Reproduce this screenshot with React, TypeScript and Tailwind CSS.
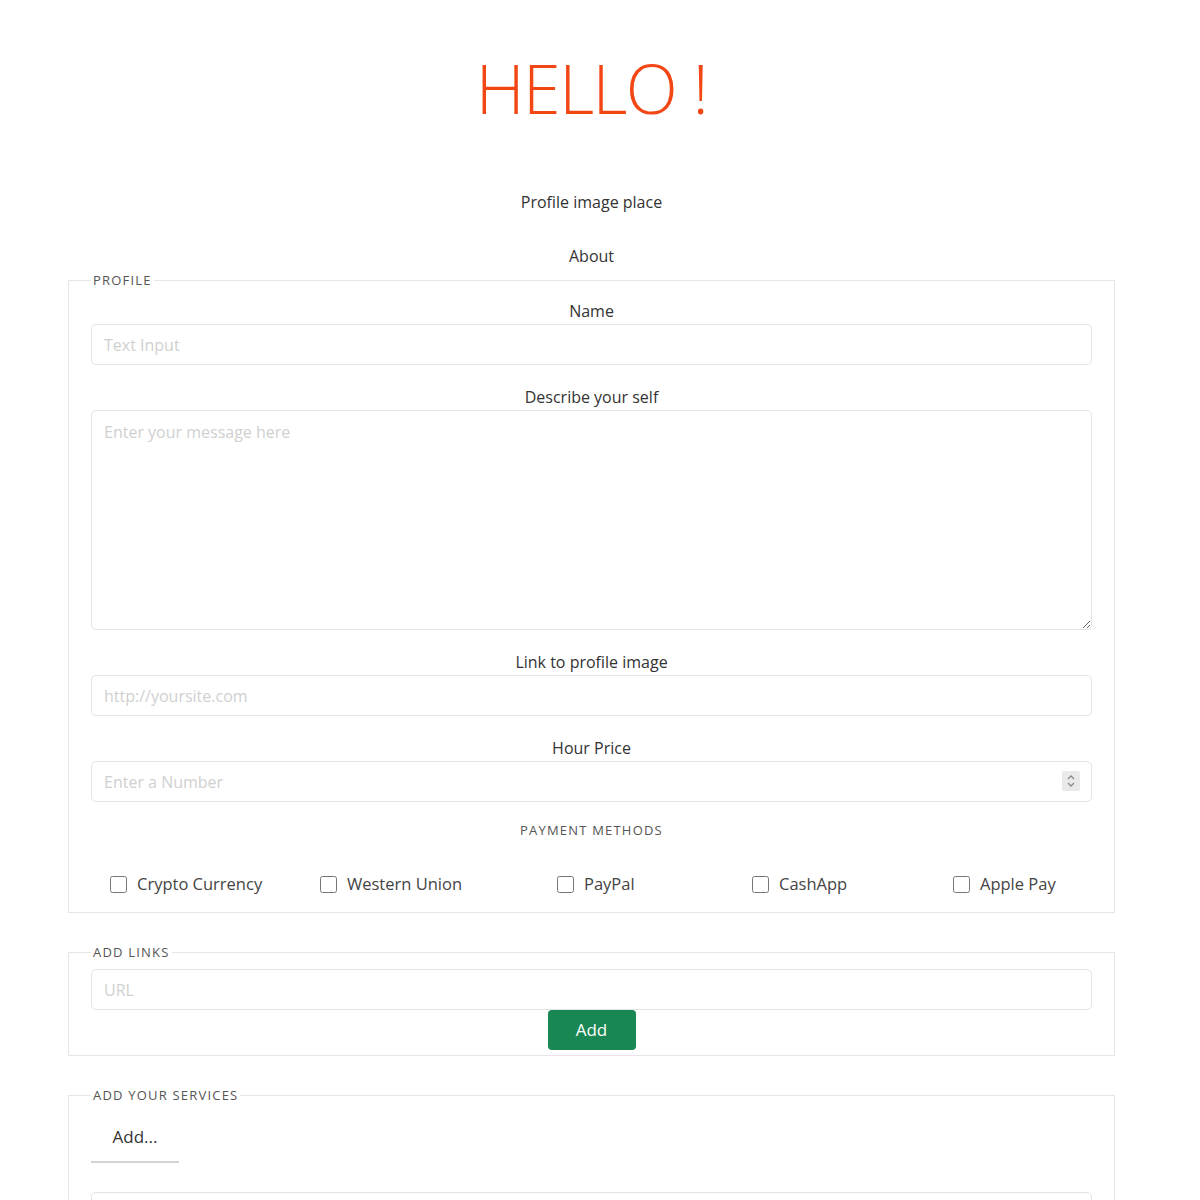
import React from 'react';

const payments = ['Crypto Currency', 'Western Union', 'PayPal', 'CashApp', 'Apple Pay'];

function Field({ label, children }: { label: string; children: React.ReactNode }) {
  return (
    <div className="flex flex-col">
      <label className="text-center text-[16px] leading-6 text-[#333] mb-px">{label}</label>
      {children}
    </div>
  );
}

const inputCls =
  'w-full h-[41px] rounded-[5px] border border-[#e3e3e3] px-3 text-[16px] text-[#333] placeholder:text-[#d0d0d0] outline-none';

// always-visible number stepper, the browser only shows its own on hover
function Stepper() {
  return (
    <div className="pointer-events-none absolute right-[12px] top-[10px] flex h-[20px] w-[18px] items-center justify-center rounded-[2px] bg-[#e9e9e9]">
      <svg width="10" height="16" viewBox="0 0 10 16" fill="none" stroke="#8a8a8a" strokeWidth="1.3">
        <path d="M2 6 L5 3 L8 6" />
        <path d="M2 10 L5 13 L8 10" />
      </svg>
    </div>
  );
}

export default function App() {
  return (
    <div className="min-h-screen bg-white" style={{ fontFamily: '"Open Sans", "Noto Sans", sans-serif' }}>
      <div className="w-[1183px] px-[68px]">
        <h1 className="pt-[47px] text-center text-[68px] font-light leading-[82px] tracking-[-1.5px] text-[#f24715]">
          HELLO !
        </h1>

        <p className="mt-[61px] text-center text-[16px] leading-6 text-[#333]">Profile image place</p>
        <p className="mt-[30px] text-center text-[16px] leading-6 text-[#333]">About</p>

        <fieldset className="mt-[3px] border border-[#e6e6e6] px-[22px] pb-[16px]">
          <legend className="px-[2px] text-[13px] leading-[18px] tracking-[1.2px] text-[#555]">PROFILE</legend>
          <div className="mt-[10px] flex flex-col gap-[20px]">
            <Field label="Name">
              <input className={inputCls} placeholder="Text Input" />
            </Field>
            <Field label="Describe your self">
              <textarea
                className="w-full h-[220px] rounded-[5px] border border-[#e3e3e3] px-3 py-[9px] text-[16px] text-[#333] placeholder:text-[#d0d0d0] outline-none"
                placeholder="Enter your message here"
              />
            </Field>
            <Field label="Link to profile image">
              <input className={inputCls} placeholder="http://yoursite.com" />
            </Field>
            <Field label="Hour Price">
              <div className="relative">
                <input type="number" className={inputCls} placeholder="Enter a Number" />
                <Stepper />
              </div>
            </Field>
          </div>
          <p className="mt-[19px] text-center text-[13px] leading-[18px] tracking-[1.2px] text-[#555]">PAYMENT METHODS</p>
          <div className="mt-[33px] grid grid-cols-[210px_237px_195px_201px_1fr] pl-[19px]">
            {payments.map((p) => (
              <label key={p} className="flex items-center gap-[10px] text-[16.5px] leading-6 text-[#444]">
                <input type="checkbox" className="h-[17px] w-[17px] accent-[#666]" />
                {p}
              </label>
            ))}
          </div>
        </fieldset>

        <fieldset className="mt-[30px] border border-[#e6e6e6] px-[22px] pb-[5px]">
          <legend className="px-[2px] text-[13px] leading-[18px] tracking-[1.2px] text-[#555]">ADD LINKS</legend>
          <input className={`${inputCls} mt-[8px]`} placeholder="URL" />
          <div className="flex justify-center">
            <button className="h-[40px] w-[88px] rounded-[4px] bg-[#198754] text-[17px] text-white">Add</button>
          </div>
        </fieldset>

        <fieldset className="mt-[30px] border border-[#e6e6e6] px-[22px] pb-[20px]">
          <legend className="px-[2px] text-[13px] leading-[18px] tracking-[1.2px] text-[#555]">ADD YOUR SERVICES</legend>
          <div className="mt-[21px] w-[88px] border-b-2 border-[#d4d4d4] pb-[12px] text-center text-[17px] leading-6 text-[#333]">
            Add...
          </div>
          <input className={`${inputCls} mt-[29px]`} placeholder="" />
        </fieldset>
      </div>
    </div>
  );
}
